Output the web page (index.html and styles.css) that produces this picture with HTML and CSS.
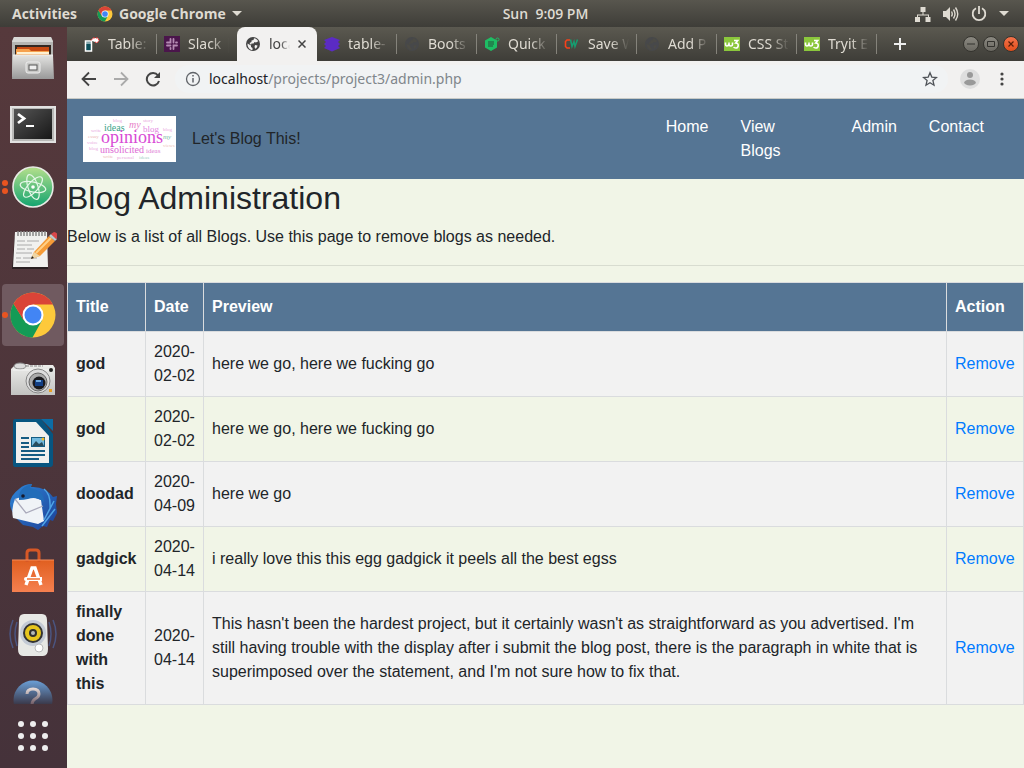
FILE: index.html
```html
<!DOCTYPE html>
<html lang="en">
<head>
<meta charset="utf-8">
<meta name="viewport" content="width=device-width, initial-scale=1">
<title>Blog Administration</title>
<link rel="stylesheet" href="styles.css">
</head>
<body class="desktop">
<svg class="defs" aria-hidden="true">
  <defs>
    <linearGradient id="metal" x1="0" y1="0" x2="0" y2="1"><stop offset="0" stop-color="#e4e4e2"/><stop offset="1" stop-color="#999"/></linearGradient>
    <linearGradient id="silver" x1="0" y1="0" x2="0" y2="1"><stop offset="0" stop-color="#eeeeec"/><stop offset="1" stop-color="#c2c2c0"/></linearGradient>
    <linearGradient id="atom" x1="0" y1="0" x2="0" y2="1"><stop offset="0" stop-color="#b5e08c"/><stop offset="1" stop-color="#12a46f"/></linearGradient>
    <linearGradient id="bird" x1="0" y1="0" x2="1" y2="1"><stop offset="0" stop-color="#2f86d8"/><stop offset="1" stop-color="#1c3f96"/></linearGradient>
    <linearGradient id="screen" x1="0" y1="0" x2="1" y2="1"><stop offset="0" stop-color="#555"/><stop offset="1" stop-color="#171717"/></linearGradient>
    <linearGradient id="bag" x1="0" y1="0" x2="0" y2="1"><stop offset="0" stop-color="#e05f20"/><stop offset="1" stop-color="#f58050"/></linearGradient>
    <linearGradient id="help" x1="0" y1="0" x2="0" y2="1"><stop offset="0" stop-color="#6b9fd6"/><stop offset=".6" stop-color="#3b3a4c"/></linearGradient>
    <linearGradient id="helpmark" gradientUnits="userSpaceOnUse" x1="0" y1="13" x2="0" y2="30"><stop offset="0" stop-color="#e6dcda"/><stop offset="1" stop-color="#6a5560"/></linearGradient>
  </defs>
  <symbol id="chrome" viewBox="0 0 48 48">
    <circle cx="24" cy="24" r="22.500" fill="#fdc93b"/>
    <path d="M4.500 12.700A22.500 22.500 0 0 0 23.500 46.500L33.100 29.200 24 24 14.900 29.200z" fill="#139b56"/>
    <path d="M4.500 12.700 14.500 29 24 24V13.500H43.900A22.500 22.500 0 0 0 4.500 12.700z" fill="#da4437"/>
    <circle cx="24" cy="24" r="10.500" fill="#fff"/><circle cx="24" cy="24" r="8.500" fill="#4285f4"/>
  </symbol>
  <symbol id="globe" viewBox="0 0 16 16">
    <circle cx="8" cy="8" r="7" fill="currentColor"/>
    <path d="M2.500 7.500 6 9.500v1.500l1.500 1v2C4.500 13.800 2.300 11 2.500 7.500zM9 2.300c2 .3 3.300 1.300 4.200 3L11 6.500 9.500 6 8.500 7.500H6.500L6 9 4.500 7 6.500 6V4.500L8.500 4zM10 9l2.500.5c-.2 1.500-1 2.700-2.200 3.300L9.500 11z" fill="var(--globe-land)"/>
  </symbol>
  <symbol id="w3" viewBox="0 0 16 14">
    <path d="M0 0h16v14H0z" fill="#8bc73c"/>
    <path d="M1.500 5.500v1.500q0 2 1.500 2t2-2V5.500v1.500q0 2 1.800 2T8.500 7V5.500M10 3.500h3.700l-2 2.500q2.800 0 2.500 2.800-.4 2.200-2.500 2.200-1.500 0-2-1" fill="none" stroke="#fff" stroke-width="1.600"/>
  </symbol>
</svg>

<header class="topbar">
  <div class="topbar-left">
    <button class="panel-button">Activities</button>
    <button class="panel-button"><svg class="icon16"><use href="#chrome"/></svg>Google Chrome<span class="caret"></span></button>
  </div>
  <time class="clock">Sun&nbsp; 9:09 PM</time>
  <div class="topbar-right">
    <svg class="icon16" viewBox="0 0 16 16"><path d="M5.500 1h5v5h-5zM0 11h5v5H0zM10.500 11h5v5h-5zM7.500 6h1v2.500H14V11h-1V9.500H3V11H2V8.500h5.500z" fill="#dfdbd2"/></svg>
    <svg class="icon16" viewBox="0 0 16 16"><path d="M0 5h3l4-4v14l-4-4H0z" fill="#dfdbd2"/><path d="M8.500 5.500q1.500 2.500 0 5M10.500 3.500q3 4.500 0 9M12.500 1.500q4.500 6.500 0 13" fill="none" stroke="#dfdbd2" stroke-width="1.400"/></svg>
    <svg class="icon16" viewBox="0 0 16 16"><path d="M5 2.300a6.300 6.300 0 1 0 6 0M8 0v8" fill="none" stroke="#dfdbd2" stroke-width="1.800"/></svg>
    <span class="caret"></span>
  </div>
</header>

<div class="workspace">
  <aside class="dock" aria-label="Applications">
    <div class="dock-list">
      <button class="dock-item" aria-label="Files"><svg class="icon48" viewBox="0 0 48 48">
        <path d="M5 2h37l2 4v36H3V6z" fill="#b5b5b3"/><path d="M5 2h37l2 5H3z" fill="#d8d8d6"/><path d="M6 10h36v14H6z" fill="#332822"/>
        <path d="M8 12h32v5H8z" fill="#c64a13"/><path d="M7 14h13l2 2h18v8H7z" fill="#f6a14d"/><path d="M8 17h32v2H8z" fill="#fff0d0"/>
        <path d="M4 20h40l1 24H3z" fill="url(#metal)"/><path d="M4 20h40" stroke="#eee"/>
        <rect x="17" y="27" width="14" height="11" rx="2" fill="#c9c9c7" stroke="#eee"/><rect x="20" y="30" width="8" height="5" fill="#eee" stroke="#555"/></svg></button>
      <button class="dock-item" aria-label="Terminal"><svg class="icon48" viewBox="0 0 48 48">
        <path d="M1 7h46v37H1z" fill="#e2e2e1"/><path d="M3 9h42v33H3z" fill="#b9b9b7"/><path d="M5 10h38v30H5z" fill="url(#screen)"/>
        <path d="m9 15 6 4.500-6 4.500" fill="none" stroke="#fff" stroke-width="2.800"/><path d="M17 27h8" stroke="#fff" stroke-width="2"/></svg></button>
      <button class="dock-item" aria-label="Atom"><span class="dots"><i></i><i></i></span><svg class="icon48" viewBox="0 0 48 48">
        <circle cx="24" cy="24" r="20" fill="url(#atom)" stroke="#e8eae5" stroke-width="1.600"/>
        <g fill="none" stroke="#e5f7e8" stroke-width="1.200"><ellipse cx="24" cy="24" rx="13" ry="5" transform="rotate(12 24 24)"/><ellipse cx="24" cy="24" rx="13" ry="5" transform="rotate(72 24 24)"/><ellipse cx="24" cy="24" rx="13" ry="5" transform="rotate(132 24 24)"/></g><circle cx="24" cy="24" r="1.800" fill="#fff"/></svg></button>
      <button class="dock-item" aria-label="Text Editor"><svg class="icon48" viewBox="0 0 48 48">
        <path d="M6 6h32l1 36H3z" fill="#2a2022"/><path d="M6 5h32l1 35H4z" fill="#f1f1ef"/>
        <path d="M9 9V4m3 5V4m3 5V4m3 5V4m3 5V4m3 5V4m3 5V4m3 5V4m3 5V4m3 5V4" stroke="#888" stroke-width="1.500"/><path d="M8 14h8m2 0h12M8 18h15M8 22h8m2 0h7M7 26h16M7 31h5m2 0h14M7 35h14" stroke="#aaa"/>
        <path d="m22 32 3-7L40 9l6 5-15 15z" fill="#f59b38"/><path d="m27 26 15-15" stroke="#ffd087" stroke-width="2"/><path d="m22 32 3-7 6 4z" fill="#efd6a5"/><path d="m22 32 1-3 2 2z" fill="#222"/><path d="m40 9 2-2 6 5-2 2z" fill="#bcc"/><path d="m42 7 3-2q3 0 4 4l-2 3z" fill="#d9484a"/></svg></button>
      <button class="dock-item dock-item-active" aria-label="Google Chrome"><span class="dots"><i></i></span><svg class="icon48"><use href="#chrome"/></svg></button>
      <button class="dock-item" aria-label="Photos"><svg class="icon48" viewBox="0 0 48 48">
        <path d="M4 12 7 9h11l3 1h23l2 3v27H2V14z" fill="url(#silver)"/><ellipse cx="11" cy="11" rx="6" ry="3" fill="#ddd" stroke="#888"/><path d="M4 15h40" stroke="#f6f6f6"/><path d="M17 11h17" stroke="#888" stroke-dasharray="3 1"/>
        <circle cx="29" cy="26" r="12" fill="#ddd" stroke="#888"/><circle cx="29" cy="27" r="9" fill="#aaa" stroke="#666"/><circle cx="30" cy="28" r="6.500" fill="#19191d"/><path d="M26 25h8v6h-8z" fill="#123e83"/><path d="M27 25h5v2h-5z" fill="#6ca6dd"/><circle cx="42" cy="15" r="2" fill="#222"/><path d="M40 34h3v3h-3z" fill="#e99f22"/></svg></button>
      <button class="dock-item" aria-label="LibreOffice Writer"><svg class="icon48" viewBox="0 0 48 48">
        <path d="M6 0h26l12 15v30q0 3-3 3H6q-2 0-2-3V3q0-3 2-3z" fill="#075580"/><path d="M32 0h12v12z" fill="#0c6da5"/><path d="M7 3h20l13 14v27H7z" fill="#f0f0ee"/>
        <path d="M12 19h8m-8 5h8m-8 4h8m-8 4h24m-24 4h24m-24 4h18" stroke="#155c83" stroke-width="2"/><path d="M22 18h14v10H22z" fill="#155c83"/><path d="M23 19h12v8H23z" fill="#73b9de"/><path d="m23 27 4-5 3 3 3-2 2 4z" fill="#294c5d"/><circle cx="34" cy="20" r="1.500" fill="#f5ba23"/></svg></button>
      <button class="dock-item" aria-label="Thunderbird"><svg class="icon48" viewBox="0 0 48 48">
        <path d="M10 6q5-5 13-5l-1 3q14-1 22 10l4-1-1 8 1 9-4 8-3-1-3 7-4-1-5 4-5-3-10-2-8-8-4-8Q-2 15 10 6z" fill="url(#bird)"/><path d="m6 16 12-4 14 5 3 21-6 3L4 35q-2-10 2-19z" fill="#f0f3f7"/><path d="m6 16 11 14 17-7" fill="none" stroke="#aab" stroke-width="1.300"/>
        <path d="M10 17q-1-13 13-16l-2 4q14 2 14 14-8-6-16-3-4 1-9 1z" fill="#226db9"/><path d="M45 18 35 37m11-11L33 43m2-37q7 5 6 20" fill="none" stroke="#4fa4e5" stroke-width="1.500"/><circle cx="14" cy="13" r="1.800" fill="#171b2d"/></svg></button>
      <button class="dock-item" aria-label="Ubuntu Software"><svg class="icon48" viewBox="0 0 48 48">
        <path d="M3 13h42v32H3z" fill="url(#bag)"/><path d="M18 15V6q0-3 3-3h6q3 0 3 3v9" fill="none" stroke="#d75826" stroke-width="3"/><path d="M3 13h42" stroke="#f58b59"/>
        <path d="m17 38 6-17h3l6 17" fill="none" stroke="#fff" stroke-width="3.400"/><path d="M15 32q0-2 2-2h16v4H17q-2 0-2-2z" fill="#fff"/><path d="M18 32h13" stroke="#ef7030" stroke-width="1.500"/></svg></button>
      <button class="dock-item" aria-label="Rhythmbox"><svg class="icon48" viewBox="0 0 48 48">
        <path d="M4 9q-6 14 0 28m4-26q-4 12 0 24M44 9q6 14 0 28m-4-26q4 12 0 24" fill="none" stroke="#4b5580" stroke-width="1.500"/>
        <path d="M15 3h18q5 0 5 6l1 29q0 7-5 7H14q-5 0-5-7l1-29q0-6 5-6z" fill="#e7e8e5"/><circle cx="24" cy="22" r="13" fill="#c3cad5"/><circle cx="24" cy="22" r="9" fill="#e6c51d" stroke="#333" stroke-width="2"/><circle cx="24" cy="22" r="4" fill="#303030"/><circle cx="24" cy="22" r="2" fill="#b5bab7"/><circle cx="30" cy="37" r="4" fill="#fff" stroke="#bbb"/></svg></button>
      <button class="dock-item" aria-label="Help"><svg class="icon48" viewBox="0 0 48 48"><circle cx="24" cy="25" r="19.500" fill="url(#help)"/><path d="M18 19q0-5 6-5t6 5q0 3-4 5-3 2-3 6" fill="none" stroke="url(#helpmark)" stroke-width="3"/></svg></button>
    </div>
    <button class="show-apps" aria-label="Show Applications"><svg class="apps-icon" viewBox="0 0 30 30"><g fill="#eee"><circle cx="3" cy="3" r="3"/><circle cx="15" cy="3" r="3"/><circle cx="27" cy="3" r="3"/><circle cx="3" cy="15" r="3"/><circle cx="15" cy="15" r="3"/><circle cx="27" cy="15" r="3"/><circle cx="3" cy="27" r="3"/><circle cx="15" cy="27" r="3"/><circle cx="27" cy="27" r="3"/></g></svg></button>
  </aside>

  <section class="browser">
    <div class="tabstrip">
      <div class="tabs">
        <button class="tab"><svg class="icon16" viewBox="0 0 16 16"><path d="M1.500 5h6v10h-6z" fill="#0c4f5a" stroke="#fff" stroke-width="1.500"/><path d="M2 7h5" stroke="#fff"/><path d="M7 4.500 9 2h5l1 2.500L13 7l-2-1" fill="#fff" stroke="#f33" stroke-dasharray="2 1"/></svg><span class="tab-title">Table:</span></button>
        <button class="tab tab-before"><svg class="icon16" viewBox="0 0 16 16"><path d="M0 0h16v16H0z" fill="#4a154b"/><path d="M6.500 3v3.500H3M3 6.500h1M9.500 3v3.500M12 6.500h1M3 9.500h3.500M6.500 12v1M9.500 13V9.500H13M9.500 6.500" fill="none" stroke="#b58bb4" stroke-width="1.800" stroke-linecap="round"/></svg><span class="tab-title">Slack |</span></button>
        <div class="tab tab-active"><svg class="icon16"><use href="#globe"/></svg><span class="tab-title">loca</span><button class="tab-close" aria-label="Close tab"><svg class="close-icon" viewBox="0 0 8 8"><path d="m.5.500 7 7m0-7-7 7" stroke="#444" stroke-width="1.500"/></svg></button></div>
        <button class="tab"><svg class="icon16" viewBox="0 0 16 16"><path d="m8 1 8 3-2 2 2 2-2 2 2 2-8 3.500L0 12l2-2-2-2 2-2-2-2z" fill="#5b2bc4"/></svg><span class="tab-title">table-</span></button>
        <button class="tab"><svg class="icon16 globe-dim"><use href="#globe"/></svg><span class="tab-title">Boots</span></button>
        <button class="tab"><svg class="icon16" viewBox="0 0 16 16"><path d="m7 1 6 3.500v7L7 15l-6-3.500v-7z" fill="#1ebe64"/><path d="M4 6h6M4 8h6M4 10h5" stroke="#24523a"/><circle cx="13.500" cy="3.500" r="1.500" fill="none" stroke="#1ebe64"/></svg><span class="tab-title">Quick</span></button>
        <button class="tab"><svg class="icon16" viewBox="0 0 16 16"><path d="M6 4H3L1.500 5.500v5L3 12h3" fill="none" stroke="#f9411a" stroke-width="1.600"/><path d="m6.500 3.500 1.500 7 2-5 1 5 2.500-7" fill="none" stroke="#159d70" stroke-width="1.500"/></svg><span class="tab-title">Save W</span></button>
        <button class="tab"><svg class="icon16 globe-dim"><use href="#globe"/></svg><span class="tab-title">Add P</span></button>
        <button class="tab"><svg class="icon16"><use href="#w3"/></svg><span class="tab-title">CSS St</span></button>
        <button class="tab"><svg class="icon16"><use href="#w3"/></svg><span class="tab-title">Tryit E</span></button>
        <button class="new-tab" aria-label="New tab"><svg class="plus-icon" viewBox="0 0 12 12"><path d="M6 0v12M0 6h12" stroke="#eee" stroke-width="2"/></svg></button>
      </div>
      <div class="window-buttons">
        <button class="window-button" aria-label="Minimize"><svg class="wb-icon" viewBox="0 0 8 8"><path d="M0 4h8" stroke="#33322e"/></svg></button>
        <button class="window-button" aria-label="Maximize"><svg class="wb-icon" viewBox="0 0 8 8"><path d="M.5 1.500h7v5h-7z" fill="none" stroke="#33322e"/></svg></button>
        <button class="window-button window-close" aria-label="Close"><svg class="wb-icon" viewBox="0 0 8 8"><path d="m1.500 1.500 5 5m0-5-5 5" stroke="#5a1e08" stroke-width="1.200"/></svg></button>
      </div>
    </div>

    <div class="toolbar">
      <button class="tool" aria-label="Back"><svg class="icon16" viewBox="0 0 16 16"><path d="M15 8H2m6-6.500L1.500 8 8 14.500" fill="none" stroke="#444" stroke-width="1.800"/></svg></button>
      <button class="tool" aria-label="Forward"><svg class="icon16" viewBox="0 0 16 16"><path d="M1 8h13M8 1.500 14.500 8 8 14.500" fill="none" stroke="#aaa" stroke-width="1.800"/></svg></button>
      <button class="tool" aria-label="Reload"><svg class="icon16" viewBox="0 0 16 16"><path d="M13 4.500A6.200 6.200 0 1 0 14 10" fill="none" stroke="#444" stroke-width="2"/><path d="M15 1v6H9z" fill="#444"/></svg></button>
      <div class="omnibox">
        <svg class="icon16" viewBox="0 0 16 16"><circle cx="8" cy="8" r="6.500" fill="none" stroke="#5f6368" stroke-width="1.300"/><path d="M8 7v4.500M8 4v1.600" stroke="#5f6368" stroke-width="1.500"/></svg>
        <a class="url" href="#"><span class="url-host">localhost</span>/projects/project3/admin.php</a>
        <button class="star" aria-label="Bookmark"><svg class="icon16" viewBox="0 0 16 16"><path d="m8 1.800 1.800 4.300 4.700.4-3.600 3 1.100 4.700-4-2.500-4 2.500 1.100-4.700-3.600-3 4.700-.4z" fill="none" stroke="#4f5358" stroke-width="1.300"/></svg></button>
      </div>
      <button class="avatar" aria-label="Profile"><svg class="avatar-icon" viewBox="0 0 20 20"><circle cx="10" cy="10" r="10" fill="#dedede"/><circle cx="10" cy="6" r="3" fill="#999"/><ellipse cx="10" cy="13.500" rx="5.800" ry="3" fill="#999"/></svg></button>
      <button class="tool" aria-label="Menu"><svg class="icon16" viewBox="0 0 16 16"><g fill="#444"><circle cx="8" cy="3" r="1.600"/><circle cx="8" cy="8" r="1.600"/><circle cx="8" cy="13" r="1.600"/></g></svg></button>
    </div>

    <div class="page">
      <nav class="navbar">
        <svg class="logo" viewBox="0 0 93 46" role="img" aria-label="Opinions word cloud">
          <path d="M0 0h93v46H0z" fill="#fff"/>
          <g font-family="Liberation Serif, serif">
            <g font-size="5" fill="#e9a8dd"><text x="30" y="6">blog</text><text x="60" y="6">story</text><text x="8" y="16">write</text><text x="80" y="15">blog</text><text x="5" y="22" fill="#edb8b8">essay</text><text x="4" y="28">voice</text><text x="6" y="34">blog</text><text x="80" y="31" fill="#eec3b9">views</text><text x="20" y="42" fill="#edb8b8">write</text><text x="34" y="43">personal</text><text x="56" y="43" fill="#9fd0c3">ideas</text></g>
            <text x="21" y="15" font-size="10" fill="#3ba489">ideas</text>
            <text x="60" y="16" font-size="9" fill="#e488df">blog</text>
            <text x="46" y="12" font-size="10" fill="#e77fc8" font-style="italic">my</text>
            <text x="17" y="37" font-size="10" fill="#dd68d4">unsolicited</text>
            <text x="80" y="23" font-size="7" fill="#7dbba7" font-style="italic">my</text>
            <text x="63" y="37" font-size="7" fill="#e080d6">ideas</text>
            <text x="18" y="27" font-size="18" fill="#d84bd5">opinions</text>
          </g>
        </svg>
        <span class="tagline">Let's Blog This!</span>
        <ul class="nav-list">
          <li><a class="nav-link" href="#">Home</a></li>
          <li><a class="nav-link nav-link-wrap" href="#">View<br>Blogs</a></li>
          <li><a class="nav-link" href="#">Admin</a></li>
          <li><a class="nav-link" href="#">Contact</a></li>
        </ul>
      </nav>
      <main>
        <h2 class="heading">Blog Administration</h2>
        <p class="intro">Below is a list of all Blogs. Use this page to remove blogs as needed.</p>
        <hr class="rule">
        <table class="blogs">
          <thead>
            <tr><th class="col-title" scope="col">Title</th><th class="col-date" scope="col">Date</th><th scope="col">Preview</th><th class="col-action" scope="col">Action</th></tr>
          </thead>
          <tbody>
            <tr><th scope="row">god</th><td>2020-02-02</td><td>here we go, here we fucking go</td><td><a class="remove" href="#">Remove</a></td></tr>
            <tr><th scope="row">god</th><td>2020-02-02</td><td>here we go, here we fucking go</td><td><a class="remove" href="#">Remove</a></td></tr>
            <tr><th scope="row">doodad</th><td>2020-04-09</td><td>here we go</td><td><a class="remove" href="#">Remove</a></td></tr>
            <tr><th scope="row">gadgick</th><td>2020-04-14</td><td>i really love this this egg gadgick it peels all the best egss</td><td><a class="remove" href="#">Remove</a></td></tr>
            <tr><th scope="row">finally done with this</th><td>2020-04-14</td><td>This hasn't been the hardest project, but it certainly wasn't as straightforward as you advertised. I'm still having trouble with the display after i submit the blog post, there is the paragraph in white that is superimposed over the statement, and I'm not sure how to fix that.</td><td><a class="remove" href="#">Remove</a></td></tr>
          </tbody>
        </table>
      </main>
    </div>
  </section>
</div>
</body>
</html>
```
FILE: styles.css
```css
* { box-sizing: border-box; }
button { border: 0; padding: 0; background: none; font: inherit; color: inherit; }
a { text-decoration: none; }

.desktop {
  margin: 0;
  height: 100vh;
  display: flex;
  flex-direction: column;
  overflow: hidden;
  font: 14px/20px "Noto Sans", "Open Sans", sans-serif;
  color: #dfdbd2;
}
.defs { position: absolute; width: 0; height: 0; }
.icon16 { width: 16px; height: 16px; flex: none; }
.icon48 { width: 48px; height: 48px; }

/* Top panel */
.topbar {
  flex: none;
  height: 27px;
  display: grid;
  grid-template-columns: 67px 1fr auto 1fr;
  align-items: center;
  background: linear-gradient(#58564e, #3e3d38);
  font-family: "Open Sans", sans-serif;
  font-weight: 700;
}
.topbar-left { grid-column: 1 / 3; display: flex; gap: 20px; padding-left: 12px; }
.panel-button { display: flex; align-items: center; gap: 6px; }
.clock { font-weight: 600; }
.topbar-right { display: flex; justify-content: flex-end; align-items: center; gap: 12px; padding-right: 15px; }
.caret { border: 5px solid transparent; border-top-color: #dfdbd2; border-bottom: 0; }

/* Dock */
.workspace { flex: 1; min-height: 0; display: flex; }
.dock { flex: none; width: 67px; display: flex; flex-direction: column; background: linear-gradient(#56393c, #45323a); }
.dock-list { flex: 1; min-height: 0; overflow: hidden; }
.dock-item { position: relative; display: grid; place-items: center; width: 62px; height: 62px; margin: 1px 2px 2px; border-radius: 4px; }
.dock-item-active { background: #705a60; }
.dots { position: absolute; left: 0; display: grid; gap: 2px; }
.dots i { width: 6px; height: 6px; border-radius: 50%; background: #e95420; }
.show-apps { flex: none; height: 64px; display: grid; place-items: center; padding-right: 1px; }
.apps-icon { width: 30px; height: 30px; }

/* Browser window */
.browser { flex: 1; min-width: 0; display: flex; flex-direction: column; }
.tabstrip { flex: none; height: 34px; display: flex; background: linear-gradient(#5b5950, #3e3d38); padding: 0 5px 0 10px; }
.tabs { flex: 1; display: flex; min-width: 0; --globe-land: #4c4b45; }
.tab { position: relative; flex: 0 1 80px; min-width: 0; display: flex; align-items: center; gap: 8px; padding: 0 8px 0 7px; text-align: left; }
.tab::after { content: ""; position: absolute; right: 0; top: 7px; width: 1px; height: 20px; background: #85837b; }
.tab-before::after, .tab-active::after { display: none; }
.tab-title { flex: 1; min-width: 0; overflow: hidden; white-space: nowrap; mask-image: linear-gradient(90deg, #000 55%, transparent); }
.tab-active { background: #f2f1f0; color: #444; border-radius: 8px 8px 0 0; --globe-land: #f2f1f0; padding-left: 8px; }
.tab-close { flex: none; display: flex; padding-right: 3px; }
.close-icon { width: 8px; height: 8px; }
.globe-dim { color: #47484a; }
.new-tab { flex: none; width: 46px; display: grid; place-items: center; }
.plus-icon { width: 12px; height: 12px; }
.window-buttons { flex: none; display: flex; align-items: center; gap: 4px; }
.window-button { width: 16px; height: 16px; border-radius: 50%; display: grid; place-items: center; background: linear-gradient(#8b8981, #6b6962); border: 1px solid #35342f; }
.window-close { background: linear-gradient(#f4734b, #e24e1b); }
.wb-icon { width: 8px; height: 8px; }

.toolbar { flex: none; height: 38px; display: flex; align-items: center; gap: 16px; padding: 0 14px 1px; background: #f2f1f0; border-bottom: 1px solid #c8cac6; }
.tool, .star { flex: none; display: flex; }
.omnibox { flex: 1; min-width: 0; height: 28px; display: flex; align-items: center; gap: 8px; margin: 0 -4px 0 -2px; padding: 0 10px; border-radius: 14px; background: #f1f3f4; }
.url { flex: 1; color: #80868b; white-space: nowrap; }
.url-host { color: #202124; }
.avatar { display: flex; margin-right: -2px; }
.avatar-icon { width: 20px; height: 20px; }

/* Page */
.page { flex: 1; min-height: 0; overflow: hidden; background: #f1f5e7; color: #212529; font: 16px/24px "Liberation Sans", Arial, sans-serif; }
.navbar { display: flex; align-items: center; gap: 16px; padding: 8px 24px 8px 16px; background: #557594; }
.logo { width: 93px; height: 46px; flex: none; }
.nav-list { display: flex; margin: 0 0 0 auto; padding: 0; list-style: none; }
.nav-link { display: block; padding: 8px 16px; color: #fff; }
.nav-link-wrap { width: 111px; }
.heading { margin: 0 0 8px; font-size: 32px; line-height: 38px; font-weight: 400; }
.intro { margin: 0 0 16px; }
.rule { margin: 16px 0; border: 0; border-top: 1px solid #d8dcd0; }
.blogs { width: 100%; border-collapse: collapse; }
.blogs th, .blogs td { border: 1px solid #dadcde; padding: 8px; text-align: left; vertical-align: middle; }
.blogs thead th { padding: 12px 8px; background: #557594; color: #fff; }
.blogs tbody tr:nth-child(odd) { background: #f2f2f2; }
.col-title { width: 78px; }
.col-date { width: 58px; }
.col-action { width: 77px; }
.remove { color: #007bff; }
```
